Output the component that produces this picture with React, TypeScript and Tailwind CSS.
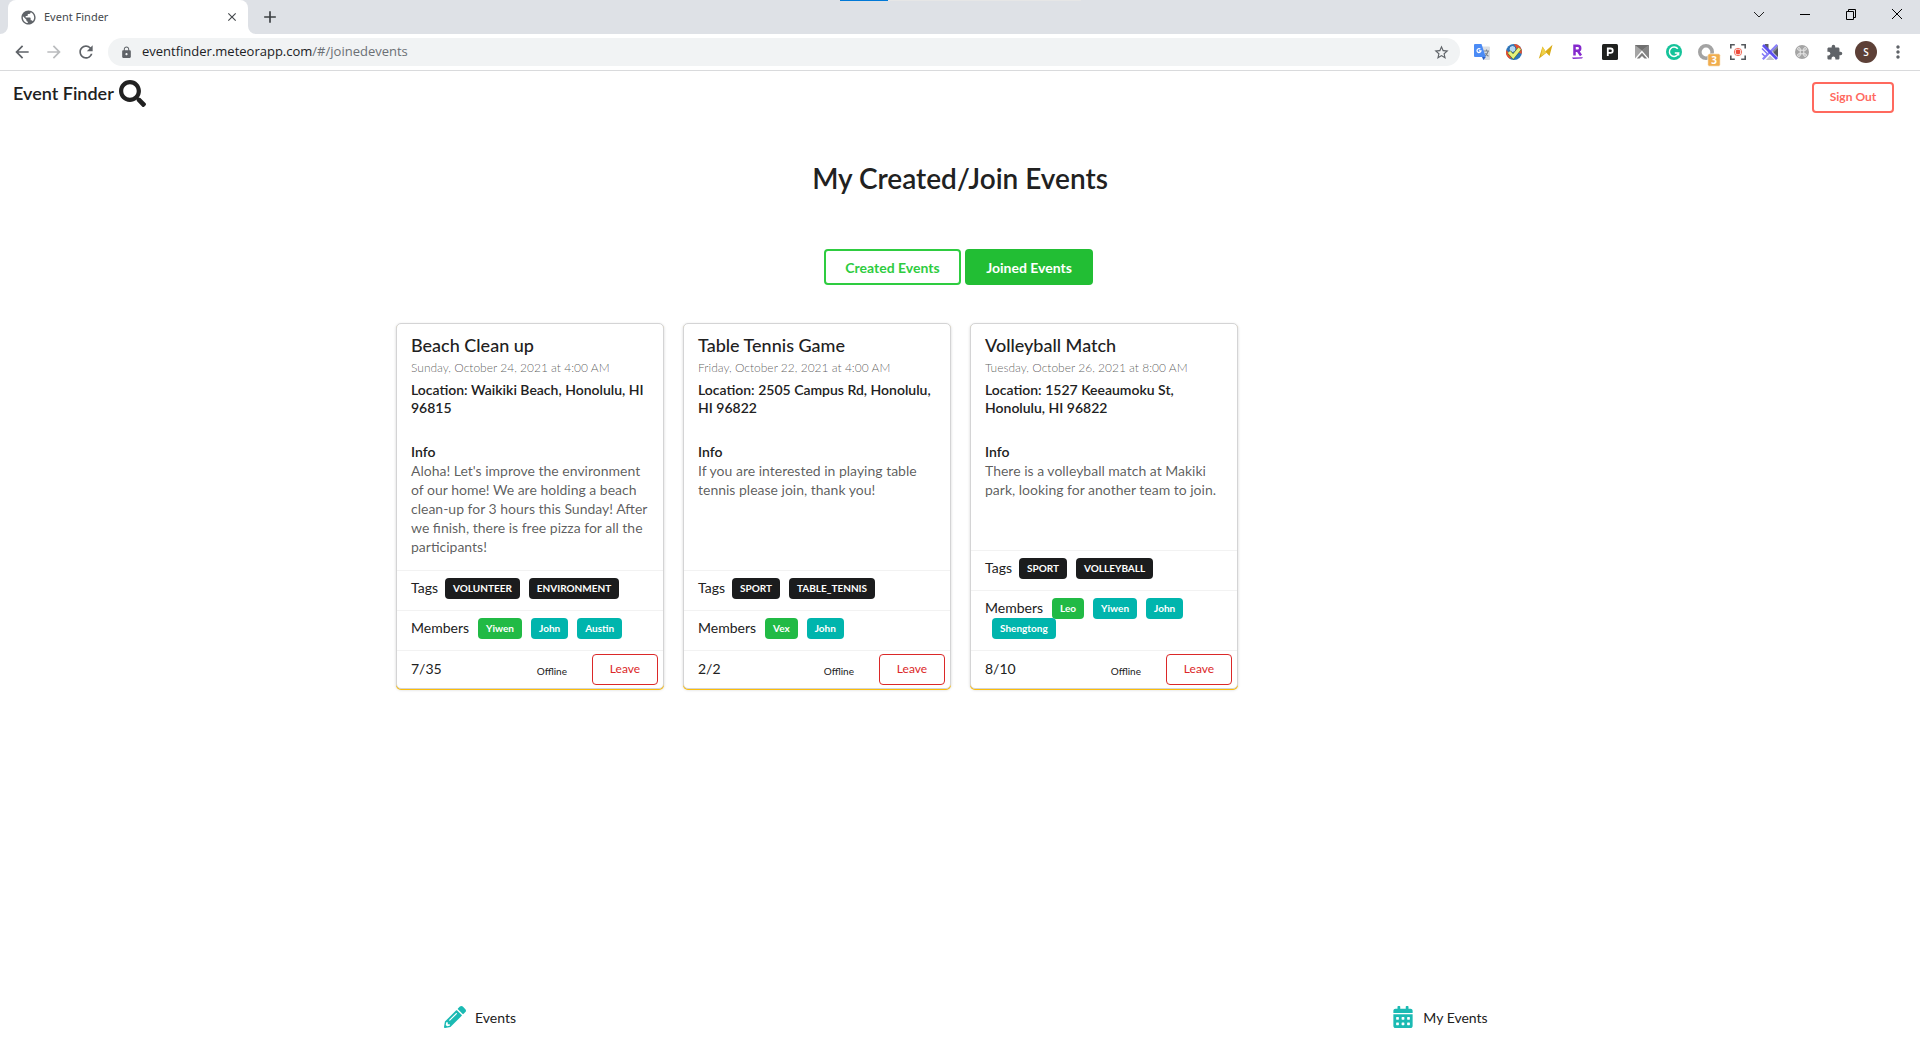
import React from "react";
import { FaSearch, FaPencilAlt, FaCalendarAlt } from "react-icons/fa";
import {
  MdArrowBack,
  MdArrowForward,
  MdRefresh,
  MdLock,
  MdStarBorder,
  MdExtension,
  MdMoreVert,
  MdPublic,
  MdClose,
  MdAdd,
} from "react-icons/md";

type EventInfo = {
  title: string;
  date: string;
  location: string;
  info: string;
  tags: string[];
  owner: string;
  members: string[];
  count: string;
};

const events: EventInfo[] = [
  {
    title: "Beach Clean up",
    date: "Sunday, October 24, 2021 at 4:00 AM",
    location: "Waikiki Beach, Honolulu, HI 96815",
    info: "Aloha! Let's improve the environment of our home! We are holding a beach clean-up for 3 hours this Sunday! After we finish, there is free pizza for all the participants!",
    tags: ["VOLUNTEER", "ENVIRONMENT"],
    owner: "Yiwen",
    members: ["John", "Austin"],
    count: "7/35",
  },
  {
    title: "Table Tennis Game",
    date: "Friday, October 22, 2021 at 4:00 AM",
    location: "2505 Campus Rd, Honolulu, HI 96822",
    info: "If you are interested in playing table tennis please join, thank you!",
    tags: ["SPORT", "TABLE_TENNIS"],
    owner: "Vex",
    members: ["John"],
    count: "2/2",
  },
  {
    title: "Volleyball Match",
    date: "Tuesday, October 26, 2021 at 8:00 AM",
    location: "1527 Keeaumoku St, Honolulu, HI 96822",
    info: "There is a volleyball match at Makiki park, looking for another team to join.",
    tags: ["SPORT", "VOLLEYBALL"],
    owner: "Leo",
    members: ["Yiwen", "John", "Shengtong"],
    count: "8/10",
  },
];

function ExtensionButton({ label, children }: { label: string; children: React.ReactNode }) {
  return (
    <button aria-label={label} className="flex size-8 items-center justify-center">
      <svg viewBox="0 0 16 16" className="size-4 overflow-visible">
        {children}
      </svg>
    </button>
  );
}

function Extensions() {
  return (
    <div className="flex items-center">
      <ExtensionButton label="Translate">
        <path d="M6 2.500h9a1 1 0 0 1 1 1V15a1 1 0 0 1-1 1H9z" fill="#dcdfe3" />
        <path d="M9.500 7h5.500M12.500 5.500V7M14.200 7c-.6 2.300-2 4.200-3.500 5M11.500 9c.6 1.300 1.600 2.400 3 3.200" stroke="#7c858d" strokeWidth="1.100" fill="none" />
        <path d="M1 0h6.500l4.300 13H1a1 1 0 0 1-1-1V1a1 1 0 0 1 1-1z" fill="#4b8bf5" />
        <path d="M8 13h3.800L9.500 16z" fill="#2b5fc4" />
        <path d="M6.400 5.100A2 2 0 1 0 7 6.900H5" stroke="#fff" strokeWidth="1.200" fill="none" />
      </ExtensionButton>
      <ExtensionButton label="Checker">
        <circle cx="8" cy="8" r="8" fill="#2c76bd" />
        <path d="M8 0a8 8 0 0 1 7.800 9.800L11 8z" fill="#e8502c" />
        <path d="M.3 6A8 8 0 0 0 4 14.900l2-3z" fill="#e8502c" />
        <circle cx="6.500" cy="5" r="3.500" fill="#b5d8f2" stroke="#2c6aa8" />
        <path d="M3 8l4.200 4.500L13.700 4.500" stroke="#4b6b2a" strokeWidth="4.200" fill="none" />
        <path d="M3 8l4.200 4.500L13.700 4.500" stroke="#e6f27c" strokeWidth="3.200" fill="none" />
      </ExtensionButton>
      <ExtensionButton label="Lightning">
        <path d="M4.500 2.500l3 4.800L14.500.8 11.500 12 8.400 8.800.8 14.800z" fill="#d9ab16" />
        <path d="M4.500 2.500l3 4.800.9 1.500L3 12z" fill="#efd04a" />
      </ExtensionButton>
      <ExtensionButton label="Rewards">
        <path d="M4.500 11.500V1.800h3.200a2.500 2.500 0 0 1 0 5H4.500M7.800 6.800l3.200 4.700" stroke="#8529cd" strokeWidth="2.500" fill="none" />
        <path d="M2 13.600l11-.4-1 1.400-9 .5z" fill="#8529cd" />
      </ExtensionButton>
      <ExtensionButton label="Pages">
        <rect width="16" height="16" rx="1.500" fill="#1f201e" />
        <path d="M5.800 12V4.500h2.800a2 2 0 0 1 0 4.300H5.800" stroke="#fff" strokeWidth="1.800" fill="none" />
      </ExtensionButton>
      <ExtensionButton label="Archive">
        <path d="M1 1h14v13.500L8 6.500l-7 8z" fill="#a5a5a5" />
        <path d="M1 1h14L8 6.500z" fill="#6f6f6f" />
        <path d="M8 6.500l7 8V1z" fill="#858585" />
        <path d="M2.800 14.500L8 8.800l5.200 5.700h-2.700L8 12l-2.500 2.500z" fill="#7d7d7d" />
      </ExtensionButton>
      <ExtensionButton label="Grammar">
        <circle cx="8" cy="8" r="8" fill="#15c39a" />
        <path d="M11.800 4.800A4.700 4.700 0 1 0 12.600 9H8.800M12.600 8.500v3" stroke="#fff" strokeWidth="1.500" fill="none" />
      </ExtensionButton>
      <ExtensionButton label="Alerts, 3 new">
        <circle cx="8" cy="8" r="6.200" fill="none" stroke="#a3a3a3" strokeWidth="3.600" />
        <rect x="9.800" y="9.800" width="12.400" height="12.400" rx="1.500" fill="#f0ad4e" stroke="#fff" strokeWidth=".6" />
        <text x="16" y="20" textAnchor="middle" fontSize="10" fontWeight="700" fill="#fff" className="font-['Noto_Sans',sans-serif]">3</text>
      </ExtensionButton>
      <ExtensionButton label="Capture">
        <path d="M.8 4.500V.8h4M11.200.8h4v3.700M15.200 11.500v3.700h-4M4.800 15.200h-4v-3.700" stroke="#54585c" strokeWidth="1.600" fill="none" />
        <circle cx="8" cy="8" r="3.700" fill="#fff" stroke="#f0604d" strokeWidth=".9" />
        <circle cx="8" cy="8" r="2.400" fill="#ef4b3b" />
      </ExtensionButton>
      <ExtensionButton label="Stripes">
        <path d="M10 7l6-6v12z" fill="#8a8d93" />
        <path d="M11.500 8.500L16 4v9z" fill="#55585e" />
        <path d="M3 0h3.500v6.500L3 3z" fill="#5a5b66" />
        <path d="M8 11.500l4.500 4.500H4z" fill="#c5c7cc" />
        <path d="M0 4.500l6 6M0 9.500l3.500 3.500" stroke="#7f77f5" strokeWidth="1.500" fill="none" />
        <path d="M.8 15.200L15.200.8" stroke="#8981f8" strokeWidth="2.300" fill="none" />
        <path d="M1 1l14 14" stroke="#5d50f0" strokeWidth="2.800" fill="none" />
      </ExtensionButton>
      <ExtensionButton label="Shortcuts">
        <circle cx="8" cy="8" r="7" fill="#a5a5a5" />
        <path d="M6.200 6.200h3.600v3.600H6.200zM6.200 6.200H5A1.300 1.300 0 1 1 6.200 5zM9.800 6.200V5A1.300 1.300 0 1 1 11 6.200zM9.800 9.800H11A1.300 1.300 0 1 1 9.800 11zM6.200 9.800V11A1.300 1.300 0 1 1 5 9.800z" stroke="#f2f2f2" strokeWidth=".9" fill="none" />
      </ExtensionButton>
      <button aria-label="Extensions" className="flex size-8 items-center justify-center text-[#5f6368]">
        <MdExtension size={17} />
      </button>
    </div>
  );
}

function BrowserChrome() {
  return (
    <div className="font-['Open_Sans',sans-serif]">
      <div className="relative flex h-[34px] items-stretch bg-[#dee1e6] pl-2">
        <div className="absolute top-0 left-[840px] flex h-px w-[241px] bg-[#e6e6e6]">
          <span className="w-12 bg-[#0078d7]" />
        </div>
        <div className="relative flex w-60 items-center rounded-t-lg bg-white pr-2 pl-3 text-[#45494d]">
          <svg viewBox="0 0 8 8" className="absolute bottom-0 -left-2 size-2">
            <path d="M8 0v8H0a8 8 0 0 0 8-8z" fill="#fff" />
          </svg>
          <svg viewBox="0 0 8 8" className="absolute -right-2 bottom-0 size-2">
            <path d="M0 0v8h8a8 8 0 0 1-8-8z" fill="#fff" />
          </svg>
          <MdPublic size={17} className="text-[#5f6368]" />
          <span className="ml-[7px] flex-1 font-['Noto_Sans',sans-serif] text-[11px]">Event Finder</span>
          <button aria-label="Close tab" className="flex size-4 items-center justify-center">
            <MdClose size={14} />
          </button>
        </div>
        <button aria-label="New tab" className="ml-3 flex w-5 items-center justify-center text-[#3c4043]">
          <MdAdd size={20} />
        </button>
        <div className="ml-auto flex">
          <button aria-label="Search tabs" className="flex w-[46px] items-center justify-center pb-1.5">
            <svg viewBox="0 0 12 12" className="size-3" fill="none" stroke="#222">
              <path d="M1 4l5 5 5-5" />
            </svg>
          </button>
          <button aria-label="Minimize" className="flex w-[46px] items-center justify-center pb-1.5">
            <svg viewBox="0 0 12 12" className="size-3" fill="none" stroke="#000">
              <path d="M1 6.500h10" />
            </svg>
          </button>
          <button aria-label="Restore" className="flex w-[46px] items-center justify-center pb-1.5">
            <svg viewBox="0 0 12 12" className="size-3" fill="none" stroke="#000">
              <path d="M1.500 3.500h7v8h-7zM3.500 3.500v-2h7v8h-2" />
            </svg>
          </button>
          <button aria-label="Close" className="flex w-[46px] items-center justify-center pb-1.5">
            <svg viewBox="0 0 12 12" className="size-3" fill="none" stroke="#000">
              <path d="M1 1l10 10M11 1L1 11" />
            </svg>
          </button>
        </div>
      </div>
      <div className="flex h-[37px] items-center border-b border-[#d9dadc] bg-white pr-1.5 pl-3 text-[#5f6368]">
        <button aria-label="Back" className="mr-3 flex size-5 items-center justify-center">
          <MdArrowBack size={20} />
        </button>
        <button aria-label="Forward" className="mr-3 flex size-5 items-center justify-center text-[#babcbe]">
          <MdArrowForward size={20} />
        </button>
        <button aria-label="Reload" className="mr-3 flex size-5 items-center justify-center">
          <MdRefresh size={20} />
        </button>
        <div className="flex h-7 flex-1 items-center rounded-full bg-[#f1f3f4] pr-2.5 pl-3">
          <MdLock size={13} className="mr-[9px]" />
          <a href="#/joinedevents" className="flex-1 text-[13px] text-[#6b7075]">
            <span className="text-[#202124]">eventfinder.meteorapp.com</span>/#/joinedevents
          </a>
          <button aria-label="Bookmark" className="flex">
            <MdStarBorder size={17} />
          </button>
        </div>
        <div className="ml-1.5 flex items-center">
          <Extensions />
          <button aria-label="Profile" className="flex size-8 items-center justify-center">
            <span className="flex size-[22px] items-center justify-center rounded-full bg-[#5d4037] text-[10px] font-semibold text-white">S</span>
          </button>
          <button aria-label="Menu" className="flex size-8 items-center justify-center">
            <MdMoreVert size={20} />
          </button>
        </div>
      </div>
    </div>
  );
}

function Tag({ tone, children }: { tone: "black" | "green" | "teal"; children: React.ReactNode }) {
  const tones = { black: "bg-[#1b1c1d]", green: "bg-[#21ba45]", teal: "bg-[#00b5ad]" };
  return (
    <span className={`inline-block h-[21px] rounded px-2 text-[10px] leading-[21px] font-bold text-white ${tones[tone]}`}>
      {children}
    </span>
  );
}

function EventCard({ event }: { event: EventInfo }) {
  return (
    <article className="flex flex-col rounded-[5px] border border-[#d4d4d5] bg-white shadow-[0_1px_0_0_#fbbd08,0_1px_3px_0_#d4d4d5]">
      <div className="flex-1 px-3.5 pt-2.5 pb-3.5">
        <h2 className="text-[18px] leading-[22px] font-medium">{event.title}</h2>
        <p className="text-[12px] leading-6 font-light text-black/65">{event.date}</p>
        <h3 className="mt-px text-[14px] leading-[18px] font-semibold">{`Location: ${event.location}`}</h3>
        <h3 className="mt-[26px] text-[14px] leading-[18px] font-semibold">Info</h3>
        <p className="text-[14px] leading-[19px] text-black/65">{event.info}</p>
      </div>
      <div className="flex h-10 gap-[7px] border-t border-black/5 px-3.5 pt-[7px] text-[14px] leading-5">
        <span>Tags</span>
        <div className="flex gap-[9px]">
          {event.tags.map((tag) => (
            <Tag key={tag} tone="black">{tag}</Tag>
          ))}
        </div>
      </div>
      <div className="border-t border-black/5 px-3.5 pt-[7px] pb-3 text-[14px] leading-5">
        <div className="flex flex-wrap gap-x-[9px]">
          <span>Members</span>
          {[event.owner, ...event.members].map((name, i) => (
            <span key={name} className={i === 3 ? "ml-[7px] flex h-5" : "flex h-5"}>
              <Tag tone={i === 0 ? "green" : "teal"}>{name}</Tag>
            </span>
          ))}
        </div>
      </div>
      <div className="flex h-[38px] items-center border-t border-black/5 pr-[5px] pl-3.5 text-[14px]">
        <span className="pb-0.5">{event.count}</span>
        <span className="mr-[25px] ml-auto pt-1 text-[10px]">Offline</span>
        <button className="h-[31px] w-[66px] rounded border border-[#db2828] pb-0.5 text-[12px] text-[#db2828]">Leave</button>
      </div>
    </article>
  );
}

export default function App() {
  return (
    <div className="flex min-h-screen flex-col bg-white font-[Lato,sans-serif] text-[#212121]">
      <BrowserChrome />
      <header className="flex items-start justify-between pt-2 pr-[26px] pl-[13px]">
        <a href="#/" className="flex items-center gap-[5px] text-[18px] leading-7 font-semibold">
          Event Finder
          <FaSearch size={27} />
        </a>
        <button className="mt-[3px] h-[31px] w-[82px] rounded border-2 border-[#ff695e] pb-0.5 text-[12px] font-bold text-[#ff695e]">
          Sign Out
        </button>
      </header>
      <main className="flex-1">
        <h1 className="mt-[47px] text-center text-[28px] leading-9 font-semibold">My Created/Join Events</h1>
        <div className="mt-[53px] flex justify-center gap-1 pr-[3px] text-[14px] font-bold">
          <button className="h-9 w-[137px] rounded border-2 border-[#2ecc40] text-[#2ecc40]">Created Events</button>
          <button className="h-9 w-32 rounded bg-[#22be34] text-white">Joined Events</button>
        </div>
        <section className="mx-auto mt-[38px] grid max-w-[1130px] grid-cols-4 gap-[19px] pl-px">
          {events.map((event) => (
            <EventCard key={event.title} event={event} />
          ))}
        </section>
      </main>
      <nav className="grid grid-cols-2 pb-3 text-[14px]">
        <a href="#/events" className="flex items-center justify-center gap-[9px]">
          <FaPencilAlt size={22} className="text-[#1bbab3]" />
          Events
        </a>
        <a href="#/joinedevents" className="flex items-center justify-center gap-[9px]">
          <FaCalendarAlt size={22} className="text-[#1bbab3]" />
          My Events
        </a>
      </nav>
    </div>
  );
}
